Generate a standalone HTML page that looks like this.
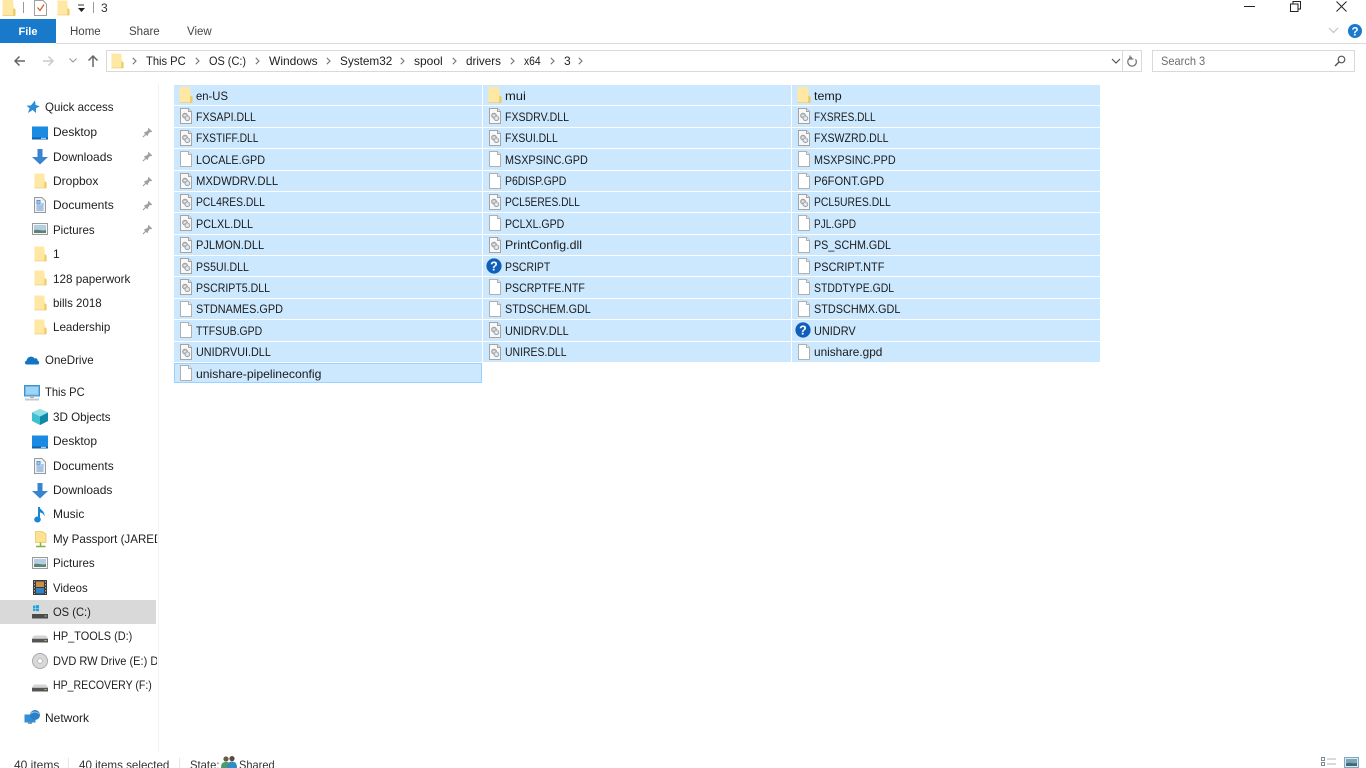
<!DOCTYPE html>
<html>
<head>
<meta charset="utf-8">
<title>3</title>
<style>
html,body{margin:0;padding:0;width:1366px;height:768px;overflow:hidden;background:#fff}
body{font-family:"Liberation Sans",sans-serif;font-size:12px;color:#1e1e1e;position:relative}
.a{position:absolute;white-space:nowrap}
.t{position:absolute;white-space:nowrap;line-height:16px;height:16px;transform-origin:left center}
svg.i{position:absolute;overflow:visible}
.r{position:absolute;height:20.4px;width:308px;background:#cce8ff}
.r span{position:absolute;left:22px;top:2.6px;line-height:16px;white-space:nowrap;color:#1a1a1a;transform-origin:left center}
.r svg{position:absolute;left:5px;top:2px}
.n{position:absolute;left:53px;line-height:16px;white-space:nowrap;color:#1e1e1e;width:104px;overflow:hidden;transform-origin:left center}
.m{left:45px}
</style>
</head>
<body>
<svg width="0" height="0" style="position:absolute">
<defs>
<symbol id="folder" viewBox="0 0 14 16"><path d="M.5 0H11L11.5 7.5 13.5 9.5V15.7H.5Z" fill="#fde69c"/><path d="M.5 0H11L11.5 7.5 11 15.7H.5Z" fill="#ffe8a4"/><path d="M11.2 8.5 13.5 9.5V15.7H11.2Z" fill="#efc962"/><path d="M.5 15.5H13.5" stroke="#e6c76e" stroke-width=".6"/></symbol>
<symbol id="dll" viewBox="0 0 14 16"><path d="M1.5.5H9.5L12.5 3.5V15.5H1.5Z" fill="#f8f8f8" stroke="#a4a4a4"/><path d="M9.5.5V3.5H12.5" fill="#e4e4e4" stroke="#a4a4a4"/><circle cx="6" cy="7.6" r="2.4" fill="#c4c4c4" stroke="#939393" stroke-width=".8"/><circle cx="8.4" cy="10.3" r="2.4" fill="#d6dde3" stroke="#8b98a4" stroke-width=".8"/><circle cx="6" cy="7.6" r=".8" fill="#f4f4f4"/><circle cx="8.4" cy="10.3" r=".8" fill="#f4f4f4"/></symbol>
<symbol id="file" viewBox="0 0 14 16"><path d="M1.5.5H9.5L12.5 3.5V15.5H1.5Z" fill="#fff" stroke="#b0b0b0"/><path d="M9.5.5V3.5H12.5" fill="#eee" stroke="#b0b0b0"/></symbol>
<symbol id="q" viewBox="0 0 16 16"><circle cx="8" cy="8" r="7.6" fill="#0f5fb8"/><text x="8" y="12.4" font-size="12.5" font-weight="700" font-family="Liberation Sans" text-anchor="middle" fill="#fff">?</text></symbol>
<symbol id="desk" viewBox="0 0 16 14"><rect width="16" height="13" y=".5" fill="#1a8ae2"/><rect y="11.5" width="16" height="2" fill="#0b62ad"/><rect x="9" y="11.8" width="5" height="1" fill="#cfe6f8"/></symbol>
<symbol id="down" viewBox="0 0 16 16"><path d="M5.5 0H10.5V8H16L8 15.5 0 8H5.5Z" fill="#3a83cf"/></symbol>
<symbol id="pics" viewBox="0 0 16 14"><rect x=".5" y=".5" width="15" height="11" fill="#f6f6f6" stroke="#9a9a9a"/><rect x="2" y="2" width="12" height="8" fill="#b4cfe4"/><path d="M2 10V7.5C5 5.5 9 8.5 14 7V10Z" fill="#5a8574"/></symbol>
<symbol id="docs" viewBox="0 0 12 16"><path d="M.5.5H8L11.5 4V15.5H.5Z" fill="#eef2f5" stroke="#9a9a9a"/><path d="M3 3.5H6V7H3ZM2.5 9H9.5M2.5 11H9.5M2.5 13H9.5" stroke="#5e97cf" fill="#a9cdeb"/><rect x="7" y="6" width="3" height="2" fill="#a9cdeb"/></symbol>
<symbol id="pin" viewBox="0 0 12 12"><path d="M7 .8 11.2 5 10 5.7 8.6 5.4 6.6 8.1 6.4 9.6 5.6 9.8 2.3 6.5 2.5 5.7 4 5.5 6.8 3.4 6.5 2Z" fill="#9f9f9f"/><path d="M3.9 8.1 1 11" stroke="#9f9f9f" stroke-width="1.2"/></symbol>
<symbol id="drive" viewBox="0 0 16 8"><path d="M2 .5H14L16 3.5V7.5H0V3.5Z" fill="#d4d4d4"/><rect y="3.8" width="16" height="3.7" fill="#555"/><rect x="12.5" y="5" width="2" height="1" fill="#9ed26a"/></symbol>
</defs>
</svg>

<!-- title bar -->
<svg class="i" style="left:2px;top:0" width="14" height="16"><use href="#folder"/></svg>
<div class="a" style="left:23px;top:2px;width:1px;height:11px;background:#999"></div>
<svg class="i" style="left:34px;top:0" width="13" height="16"><path d="M.5.5H9L12.5 4V15.5H.5Z" fill="#fff" stroke="#a0a0a0"/><path d="M3.5 7.5 6 10.5 10 4.5" fill="none" stroke="#d9542b" stroke-width="1.2"/></svg>
<svg class="i" style="left:57px;top:0" width="13" height="16"><use href="#folder"/></svg>
<svg class="i" style="left:77px;top:5px" width="9" height="9"><path d="M1 0H7" stroke="#333"/><path d="M1 3H8L4.5 7Z" fill="#222"/></svg>
<div class="a" style="left:93px;top:2px;width:1px;height:11px;background:#999"></div>
<div class="t" style="left:101px;top:0;color:#333">3</div>
<svg class="i" style="left:1244px;top:6px" width="11" height="1"><rect width="11" height="1" fill="#222"/></svg>
<svg class="i" style="left:1290px;top:1px" width="11" height="11"><path d="M.5 3H8V10.5H.5Z M3 3V.5H10.5V8H8" fill="none" stroke="#222"/></svg>
<svg class="i" style="left:1336px;top:1px" width="11" height="11"><path d="M.5.5 10.5 10.5M10.5.5 .5 10.5" stroke="#222" stroke-width="1"/></svg>

<!-- ribbon -->
<div class="a" style="left:0;top:19px;width:56px;height:24px;background:#1979ca;color:#fff;text-align:center;line-height:26px;font-weight:700;font-size:11px">File</div>
<div class="t" style="left:70px;top:24px;color:#444;font-size:11.5px">Home</div>
<div class="t" style="left:129px;top:24px;color:#444;font-size:11.5px">Share</div>
<div class="t" style="left:187px;top:24px;color:#444;font-size:11.5px">View</div>
<div class="a" style="left:56px;top:43px;width:1310px;height:1px;background:#dadbdc"></div>
<svg class="i" style="left:1328px;top:27px" width="11" height="7"><path d="M1 1 5.5 5.5 10 1" fill="none" stroke="#c4c4c4" stroke-width="1.2"/></svg>
<svg class="i" style="left:1348px;top:24px" width="14" height="14"><circle cx="7" cy="7" r="7" fill="#1979ca"/><text x="7" y="11.3" font-size="11.5" font-weight="700" font-family="Liberation Sans" text-anchor="middle" fill="#fff">?</text></svg>

<!-- nav -->
<svg class="i" style="left:13px;top:55px" width="13" height="12"><path d="M12 6H2M6.5 1.5 2 6 6.5 10.5" fill="none" stroke="#666" stroke-width="1.5"/></svg>
<svg class="i" style="left:42px;top:55px" width="13" height="12"><path d="M1 6H11M6.5 1.5 11 6 6.5 10.5" fill="none" stroke="#c9c9c9" stroke-width="1.5"/></svg>
<svg class="i" style="left:69px;top:58px" width="8" height="5"><path d="M.5.5 4 4 7.5.5" fill="none" stroke="#999" stroke-width="1.1"/></svg>
<svg class="i" style="left:87px;top:54px" width="12" height="13"><path d="M6 13V2M1.5 6.5 6 2 10.5 6.5" fill="none" stroke="#666" stroke-width="1.5"/></svg>
<div class="a" style="left:106px;top:50px;width:1034px;height:20px;border:1px solid #d9d9d9;box-sizing:content-box"></div>
<svg class="i" style="left:111px;top:53px" width="13" height="16"><use href="#folder"/></svg>

<svg class="i" style="left:132px;top:57px" width="5" height="8"><path d="M.8.8 4 4 .8 7.2" fill="none" stroke="#777" stroke-width="1.1"/></svg>
<div class="t" style="left:146px;top:53px;transform:scaleX(.93)">This PC</div>
<svg class="i" style="left:195px;top:57px" width="5" height="8"><path d="M.8.8 4 4 .8 7.2" fill="none" stroke="#777" stroke-width="1.1"/></svg>
<div class="t" style="left:209px;top:53px;transform:scaleX(.91)">OS (C:)</div>
<svg class="i" style="left:255px;top:57px" width="5" height="8"><path d="M.8.8 4 4 .8 7.2" fill="none" stroke="#777" stroke-width="1.1"/></svg>
<div class="t" style="left:269px;top:53px">Windows</div>
<svg class="i" style="left:326px;top:57px" width="5" height="8"><path d="M.8.8 4 4 .8 7.2" fill="none" stroke="#777" stroke-width="1.1"/></svg>
<div class="t" style="left:340px;top:53px;transform:scaleX(.98)">System32</div>
<svg class="i" style="left:400px;top:57px" width="5" height="8"><path d="M.8.8 4 4 .8 7.2" fill="none" stroke="#777" stroke-width="1.1"/></svg>
<div class="t" style="left:414px;top:53px">spool</div>
<svg class="i" style="left:452px;top:57px" width="5" height="8"><path d="M.8.8 4 4 .8 7.2" fill="none" stroke="#777" stroke-width="1.1"/></svg>
<div class="t" style="left:466px;top:53px;transform:scaleX(.97)">drivers</div>
<svg class="i" style="left:510px;top:57px" width="5" height="8"><path d="M.8.8 4 4 .8 7.2" fill="none" stroke="#777" stroke-width="1.1"/></svg>
<div class="t" style="left:524px;top:53px;transform:scaleX(.86)">x64</div>
<svg class="i" style="left:550px;top:57px" width="5" height="8"><path d="M.8.8 4 4 .8 7.2" fill="none" stroke="#777" stroke-width="1.1"/></svg>
<div class="t" style="left:564px;top:53px">3</div>
<svg class="i" style="left:578px;top:57px" width="5" height="8"><path d="M.8.8 4 4 .8 7.2" fill="none" stroke="#777" stroke-width="1.1"/></svg>

<svg class="i" style="left:1111px;top:58px" width="10" height="6"><path d="M1 1 5 5 9 1" fill="none" stroke="#555" stroke-width="1.2"/></svg>
<div class="a" style="left:1122px;top:51px;width:1px;height:20px;background:#d9d9d9"></div>
<svg class="i" style="left:1126px;top:55px" width="12" height="13"><path d="M9.5 4.2A4.3 4.3 0 1 1 6 2.5H4M4 .5V4H7.5" fill="none" stroke="#777" stroke-width="1.2"/></svg>
<div class="a" style="left:1152px;top:50px;width:201px;height:20px;border:1px solid #d9d9d9"></div>
<div class="t" style="left:1161px;top:53px;color:#6d6d6d;transform:scaleX(.92)">Search 3</div>
<svg class="i" style="left:1334px;top:55px" width="12" height="12"><circle cx="7.5" cy="4.5" r="3.3" fill="none" stroke="#555" stroke-width="1.2"/><path d="M5 7 1 11" stroke="#555" stroke-width="1.5"/></svg>

<!-- sidebar -->
<div class="a" style="left:158px;top:84px;width:1px;height:668px;background:#f2f2f2"></div>
<div class="a" style="left:0;top:600px;width:156px;height:24px;background:#d9d9d9"></div>

<svg class="i" style="left:26px;top:100px" width="14" height="14"><path d="M9 .5 9.6 5 13.8 6.2 10 8.4 10 13 6.6 10 2 13 3.6 8.2.5 5.8 5 5.4Z" fill="#2b8cd8"/></svg>
<div class="n m" style="top:99px;transform:scaleX(.96);width:112px">Quick access</div>
<svg class="i" style="left:32px;top:126px" width="16" height="14"><use href="#desk"/></svg>
<div class="n" style="top:124px">Desktop</div>
<svg class="i" style="left:142px;top:127px" width="11" height="11"><use href="#pin"/></svg>
<svg class="i" style="left:32px;top:149px" width="16" height="16"><use href="#down"/></svg>
<div class="n" style="top:148.5px">Downloads</div>
<svg class="i" style="left:142px;top:151px" width="11" height="11"><use href="#pin"/></svg>
<svg class="i" style="left:34px;top:173px" width="13" height="16"><use href="#folder"/></svg>
<div class="n" style="top:173px">Dropbox</div>
<svg class="i" style="left:142px;top:176px" width="11" height="11"><use href="#pin"/></svg>
<svg class="i" style="left:34px;top:197px" width="12" height="16"><use href="#docs"/></svg>
<div class="n" style="top:197px">Documents</div>
<svg class="i" style="left:142px;top:200px" width="11" height="11"><use href="#pin"/></svg>
<svg class="i" style="left:32px;top:223px" width="16" height="14"><use href="#pics"/></svg>
<div class="n" style="top:221.5px;transform:scaleX(.96);width:108px">Pictures</div>
<svg class="i" style="left:142px;top:224px" width="11" height="11"><use href="#pin"/></svg>
<svg class="i" style="left:34px;top:246px" width="13" height="16"><use href="#folder"/></svg>
<div class="n" style="top:246px">1</div>
<svg class="i" style="left:34px;top:270px" width="13" height="16"><use href="#folder"/></svg>
<div class="n" style="top:270.5px;transform:scaleX(.975);width:107px">128 paperwork</div>
<svg class="i" style="left:34px;top:295px" width="13" height="16"><use href="#folder"/></svg>
<div class="n" style="top:295px;transform:scaleX(.96);width:108px">bills 2018</div>
<svg class="i" style="left:34px;top:319px" width="13" height="16"><use href="#folder"/></svg>
<div class="n" style="top:319px;transform:scaleX(.965);width:108px">Leadership</div>

<svg class="i" style="left:24px;top:355px" width="16" height="10"><path d="M3 9.5C.5 9.5 0 6.5 2.5 5.8 3 2 8 0 10.5 3.5 13 2.5 14 5 13.5 5.5 15.5 6 16 9.5 13.5 9.5Z" fill="#1474c4"/></svg>
<div class="n m" style="top:352px;transform:scaleX(.96);width:112px">OneDrive</div>

<svg class="i" style="left:24px;top:385px" width="16" height="16"><rect x=".5" y=".5" width="15" height="10.5" fill="#6cb8ec" stroke="#4a90c8"/><rect x="2" y="2" width="12" height="7.5" fill="#9fd4f5"/><rect x="6" y="11" width="4" height="2" fill="#aeb8c0"/><rect x="1" y="13.5" width="14" height="2" fill="#c4cbd0"/></svg>
<div class="n m" style="top:384px;transform:scaleX(.93);width:112px">This PC</div>
<svg class="i" style="left:32px;top:409px" width="16" height="16"><path d="M8 0 16 3.5V12L8 16 0 12V3.5Z" fill="#3ec1cf"/><path d="M8 7.5 16 3.5V12L8 16Z" fill="#1387a8"/><path d="M8 0 16 3.5 8 7.5 0 3.5Z" fill="#8fe0e6"/></svg>
<div class="n" style="top:408.5px;transform:scaleX(.97);width:107px">3D Objects</div>
<svg class="i" style="left:32px;top:435px" width="16" height="14"><use href="#desk"/></svg>
<div class="n" style="top:433px">Desktop</div>
<svg class="i" style="left:34px;top:458px" width="12" height="16"><use href="#docs"/></svg>
<div class="n" style="top:457.5px">Documents</div>
<svg class="i" style="left:32px;top:483px" width="16" height="16"><use href="#down"/></svg>
<div class="n" style="top:482px">Downloads</div>
<svg class="i" style="left:34px;top:506px" width="12" height="17"><path d="M5 1V13" stroke="#1a84d6" stroke-width="2"/><path d="M5 .5C6 4 11 4.5 10.5 10.5 9.5 7 7 6.5 5.5 6.5Z" fill="#1a84d6"/><ellipse cx="3.5" cy="13.5" rx="3.3" ry="3" fill="#1a84d6"/></svg>
<div class="n" style="top:506px">Music</div>
<svg class="i" style="left:35px;top:531px" width="13" height="17"><path d="M.5.5H7L11 3V11.5H.5Z" fill="#ffe28e" stroke="#e3c66c" stroke-width=".8"/><path d="M5.5 11.5V15M1 15.5H10.5" stroke="#7fb23a" stroke-width="1.4"/></svg>
<div class="n" style="top:531px;transform:scaleX(.965);width:108px">My Passport (JARED</div>
<svg class="i" style="left:32px;top:557px" width="16" height="14"><use href="#pics"/></svg>
<div class="n" style="top:555px;transform:scaleX(.96);width:108px">Pictures</div>
<svg class="i" style="left:33px;top:580px" width="14" height="15"><rect width="14" height="15" fill="#3a3a3a"/><rect x="3" y="1.5" width="8" height="5.5" fill="#c98f4a"/><rect x="3" y="8" width="8" height="5.5" fill="#2f83c9"/><path d="M1.5 1V14M12.5 1V14" stroke="#aaa" stroke-dasharray="1.5 1.5"/></svg>
<div class="n" style="top:579.5px;transform:scaleX(.95);width:109px">Videos</div>
<svg class="i" style="left:32px;top:605px" width="16" height="14"><path d="M1 .8 3.5.4V3H1ZM4 .3 7 0V3H4ZM1 3.5H3.5V6H1ZM4 3.5H7V6.2L4 6Z" fill="#19a7e0"/><rect y="9" width="16" height="4.5" fill="#4c4c4c"/><rect x="12.5" y="10.5" width="2" height="1" fill="#9ed26a"/></svg>
<div class="n" style="top:604px;transform:scaleX(.93);width:111px">OS (C:)</div>
<svg class="i" style="left:32px;top:635px" width="16" height="8"><use href="#drive"/></svg>
<div class="n" style="top:628px;transform:scaleX(.91);width:114px">HP_TOOLS (D:)</div>
<svg class="i" style="left:32px;top:653px" width="16" height="16"><circle cx="8" cy="8" r="7.5" fill="#d8d8d8" stroke="#aaa"/><circle cx="8" cy="8" r="2.4" fill="#fff" stroke="#bbb"/></svg>
<div class="n" style="top:653px;transform:scaleX(.92);width:113px">DVD RW Drive (E:) D</div>
<svg class="i" style="left:32px;top:684px" width="16" height="8"><use href="#drive"/></svg>
<div class="n" style="top:677px;transform:scaleX(.88);width:118px">HP_RECOVERY (F:)</div>
<svg class="i" style="left:24px;top:710px" width="17" height="15"><rect x=".5" y="4.5" width="11" height="8" fill="#2f8fd8"/><rect x="4" y="12.5" width="4" height="1.5" fill="#999"/><circle cx="11" cy="5" r="5" fill="#2d7fc4"/><path d="M7 3.5C9 1.5 13 1.5 15 4" stroke="#8fc9ef" fill="none"/></svg>
<div class="n m" style="top:710px">Network</div>

<!-- file grid -->
<div class="r" style="left:174px;top:85px"><svg width="14" height="16"><use href="#folder"/></svg><span style="transform:scaleX(.94)">en-US</span></div>
<div class="r" style="left:483px;top:85px"><svg width="14" height="16"><use href="#folder"/></svg><span style="transform:scaleX(1.08)">mui</span></div>
<div class="r" style="left:792px;top:85px"><svg width="14" height="16"><use href="#folder"/></svg><span style="transform:scaleX(1.04)">temp</span></div>

<div class="r" style="left:174px;top:106.4px"><svg width="14" height="16"><use href="#dll"/></svg><span style="transform:scaleX(.88)">FXSAPI.DLL</span></div>
<div class="r" style="left:483px;top:106.4px"><svg width="14" height="16"><use href="#dll"/></svg><span style="transform:scaleX(.88)">FXSDRV.DLL</span></div>
<div class="r" style="left:792px;top:106.4px"><svg width="14" height="16"><use href="#dll"/></svg><span style="transform:scaleX(.84)">FXSRES.DLL</span></div>

<div class="r" style="left:174px;top:127.8px"><svg width="14" height="16"><use href="#dll"/></svg><span style="transform:scaleX(.86)">FXSTIFF.DLL</span></div>
<div class="r" style="left:483px;top:127.8px"><svg width="14" height="16"><use href="#dll"/></svg><span style="transform:scaleX(.87)">FXSUI.DLL</span></div>
<div class="r" style="left:792px;top:127.8px"><svg width="14" height="16"><use href="#dll"/></svg><span style="transform:scaleX(.88)">FXSWZRD.DLL</span></div>

<div class="r" style="left:174px;top:149.2px"><svg width="14" height="16"><use href="#file"/></svg><span style="transform:scaleX(.9)">LOCALE.GPD</span></div>
<div class="r" style="left:483px;top:149.2px"><svg width="14" height="16"><use href="#file"/></svg><span style="transform:scaleX(.9)">MSXPSINC.GPD</span></div>
<div class="r" style="left:792px;top:149.2px"><svg width="14" height="16"><use href="#file"/></svg><span style="transform:scaleX(.9)">MSXPSINC.PPD</span></div>

<div class="r" style="left:174px;top:170.5px"><svg width="14" height="16"><use href="#dll"/></svg><span style="transform:scaleX(.94)">MXDWDRV.DLL</span></div>
<div class="r" style="left:483px;top:170.5px"><svg width="14" height="16"><use href="#file"/></svg><span style="transform:scaleX(.87)">P6DISP.GPD</span></div>
<div class="r" style="left:792px;top:170.5px"><svg width="14" height="16"><use href="#file"/></svg><span style="transform:scaleX(.93)">P6FONT.GPD</span></div>

<div class="r" style="left:174px;top:191.9px"><svg width="14" height="16"><use href="#dll"/></svg><span style="transform:scaleX(.86)">PCL4RES.DLL</span></div>
<div class="r" style="left:483px;top:191.9px"><svg width="14" height="16"><use href="#dll"/></svg><span style="transform:scaleX(.85)">PCL5ERES.DLL</span></div>
<div class="r" style="left:792px;top:191.9px"><svg width="14" height="16"><use href="#dll"/></svg><span style="transform:scaleX(.865)">PCL5URES.DLL</span></div>

<div class="r" style="left:174px;top:213.3px"><svg width="14" height="16"><use href="#dll"/></svg><span style="transform:scaleX(.9)">PCLXL.DLL</span></div>
<div class="r" style="left:483px;top:213.3px"><svg width="14" height="16"><use href="#file"/></svg><span style="transform:scaleX(.88)">PCLXL.GPD</span></div>
<div class="r" style="left:792px;top:213.3px"><svg width="14" height="16"><use href="#file"/></svg><span style="transform:scaleX(.84)">PJL.GPD</span></div>

<div class="r" style="left:174px;top:234.7px"><svg width="14" height="16"><use href="#dll"/></svg><span style="transform:scaleX(.92)">PJLMON.DLL</span></div>
<div class="r" style="left:483px;top:234.7px"><svg width="14" height="16"><use href="#dll"/></svg><span style="transform:scaleX(1.03)">PrintConfig.dll</span></div>
<div class="r" style="left:792px;top:234.7px"><svg width="14" height="16"><use href="#file"/></svg><span style="transform:scaleX(.895)">PS_SCHM.GDL</span></div>

<div class="r" style="left:174px;top:256.1px"><svg width="14" height="16"><use href="#dll"/></svg><span style="transform:scaleX(.88)">PS5UI.DLL</span></div>
<div class="r" style="left:483px;top:256.1px"><svg width="16" height="16" style="left:3px"><use href="#q"/></svg><span style="transform:scaleX(.87)">PSCRIPT</span></div>
<div class="r" style="left:792px;top:256.1px"><svg width="14" height="16"><use href="#file"/></svg><span style="transform:scaleX(.91)">PSCRIPT.NTF</span></div>

<div class="r" style="left:174px;top:277.4px"><svg width="14" height="16"><use href="#dll"/></svg><span style="transform:scaleX(.88)">PSCRIPT5.DLL</span></div>
<div class="r" style="left:483px;top:277.4px"><svg width="14" height="16"><use href="#file"/></svg><span style="transform:scaleX(.88)">PSCRPTFE.NTF</span></div>
<div class="r" style="left:792px;top:277.4px"><svg width="14" height="16"><use href="#file"/></svg><span style="transform:scaleX(.87)">STDDTYPE.GDL</span></div>

<div class="r" style="left:174px;top:298.8px"><svg width="14" height="16"><use href="#file"/></svg><span style="transform:scaleX(.906)">STDNAMES.GPD</span></div>
<div class="r" style="left:483px;top:298.8px"><svg width="14" height="16"><use href="#file"/></svg><span style="transform:scaleX(.9)">STDSCHEM.GDL</span></div>
<div class="r" style="left:792px;top:298.8px"><svg width="14" height="16"><use href="#file"/></svg><span style="transform:scaleX(.906)">STDSCHMX.GDL</span></div>

<div class="r" style="left:174px;top:320.2px"><svg width="14" height="16"><use href="#file"/></svg><span style="transform:scaleX(.87)">TTFSUB.GPD</span></div>
<div class="r" style="left:483px;top:320.2px"><svg width="14" height="16"><use href="#dll"/></svg><span style="transform:scaleX(.91)">UNIDRV.DLL</span></div>
<div class="r" style="left:792px;top:320.2px"><svg width="16" height="16" style="left:3px"><use href="#q"/></svg><span style="transform:scaleX(.91)">UNIDRV</span></div>

<div class="r" style="left:174px;top:341.6px"><svg width="14" height="16"><use href="#dll"/></svg><span style="transform:scaleX(.9)">UNIDRVUI.DLL</span></div>
<div class="r" style="left:483px;top:341.6px"><svg width="14" height="16"><use href="#dll"/></svg><span style="transform:scaleX(.87)">UNIRES.DLL</span></div>
<div class="r" style="left:792px;top:341.6px"><svg width="14" height="16"><use href="#file"/></svg><span style="transform:scaleX(.985)">unishare.gpd</span></div>

<div class="r" style="left:174px;top:363px;box-shadow:inset 0 0 0 1px #99d1ff"><svg width="14" height="16"><use href="#file"/></svg><span style="transform:scaleX(1.016)">unishare-pipelineconfig</span></div>

<!-- status bar -->
<div class="t" style="left:14px;top:757px;color:#333">40 items</div>
<div class="a" style="left:68px;top:758px;width:1px;height:10px;background:#e6e6e6"></div>
<div class="t" style="left:79px;top:757px;color:#333;transform:scaleX(.968)">40 items selected</div>
<div class="a" style="left:179px;top:758px;width:1px;height:10px;background:#e6e6e6"></div>
<div class="t" style="left:190px;top:757px;color:#333;transform:scaleX(.94)">State:</div>
<svg class="i" style="left:221px;top:756px" width="16" height="12"><circle cx="5" cy="3" r="2.6" fill="#6a5a4a"/><path d="M0 12C0 7 2 6 5 6S10 7 10 12Z" fill="#4e9a6a"/><circle cx="11" cy="2.6" r="2.6" fill="#5a4a3c"/><path d="M6 12C6 7 8 5.6 11 5.6S16 7 16 12Z" fill="#2c8fc0"/></svg>
<div class="t" style="left:239px;top:757px;color:#333;transform:scaleX(.92)">Shared</div>
<svg class="i" style="left:1321px;top:757px" width="16" height="11"><rect x=".5" y=".5" width="3" height="3" fill="none" stroke="#7a8a9a"/><rect x=".5" y="5.5" width="3" height="3" fill="none" stroke="#7a8a9a"/><path d="M6 2H15M6 7H15" stroke="#aab4bd"/></svg>
<svg class="i" style="left:1344px;top:757px" width="15" height="11"><rect x=".5" y=".5" width="14" height="10" fill="#d8e8f4" stroke="#7fa7c6"/><rect x="2" y="2" width="11" height="7" fill="#7fa3b8"/><path d="M2 9V6.5C6 5 9 7 13 6V9Z" fill="#3f6a72"/></svg>
</body>
</html>
